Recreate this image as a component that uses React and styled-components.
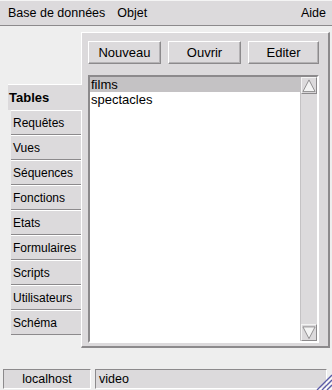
import React, { useState } from "react";
import styled, { createGlobalStyle } from "styled-components";

const GlobalStyle = createGlobalStyle`
  html, body {
    margin: 0;
    padding: 0;
    background: #eeeeee;
  }
  body {
    font-family: "Liberation Sans", Arial, sans-serif;
    font-size: 12px;
    color: #000;
  }
`;

const TABS = [
  "Tables",
  "Requêtes",
  "Vues",
  "Séquences",
  "Fonctions",
  "Etats",
  "Formulaires",
  "Scripts",
  "Utilisateurs",
  "Schéma",
];

const ITEMS = ["films", "spectacles"];

const App = () => {
  const [tab, setTab] = useState("Tables");
  const [selected, setSelected] = useState("films");

  return (
    <Window>
      <GlobalStyle />
      <MenuBar>
        <MenuItem>Base de données</MenuItem>
        <MenuItem>Objet</MenuItem>
        <MenuSpacer />
        <MenuItem>Aide</MenuItem>
      </MenuBar>

      <Body>
        <TabColumn>
          {TABS.map((t) => (
            <Tab key={t} $active={t === tab} onClick={() => setTab(t)}>
              {t}
            </Tab>
          ))}
        </TabColumn>

        <Panel>
          <ButtonRow>
            <Button>Nouveau</Button>
            <Button>Ouvrir</Button>
            <Button>Editer</Button>
          </ButtonRow>

          <ListBox>
            <ListItems>
              {ITEMS.map((it) => (
                <ListItem
                  key={it}
                  $selected={it === selected}
                  onClick={() => setSelected(it)}
                >
                  {it}
                </ListItem>
              ))}
            </ListItems>
            <ScrollBar>
              <ArrowButton>
                <svg width="15" height="15" viewBox="0 0 15 15">
                  <polygon points="7.5,1.5 1,14 14,14" fill="#f4f4f4" stroke="#8c8a8c" strokeWidth="1" />
                </svg>
              </ArrowButton>
              <Track />
              <ArrowButton>
                <svg width="15" height="15" viewBox="0 0 15 15">
                  <polygon points="1,1.5 14,1.5 7.5,14" fill="#f4f4f4" stroke="#8c8a8c" strokeWidth="1" />
                </svg>
              </ArrowButton>
            </ScrollBar>
          </ListBox>
        </Panel>
      </Body>

      <StatusBar>
        <StatusCell $width="88px" $center>localhost</StatusCell>
        <StatusCell $grow>video</StatusCell>
        <Grip>
          <svg width="16" height="16" viewBox="0 0 16 16">
            <line x1="16" y1="1" x2="1" y2="16" stroke="#5a5aa8" strokeWidth="1.3" />
            <line x1="16" y1="3.5" x2="3.5" y2="16" stroke="#ffffff" strokeWidth="1" />
            <line x1="16" y1="6" x2="6" y2="16" stroke="#5a5aa8" strokeWidth="1.3" />
            <line x1="16" y1="8.5" x2="8.5" y2="16" stroke="#ffffff" strokeWidth="1" />
            <line x1="16" y1="11" x2="11" y2="16" stroke="#5a5aa8" strokeWidth="1.3" />
            <line x1="16" y1="13.5" x2="13.5" y2="16" stroke="#ffffff" strokeWidth="1" />
          </svg>
        </Grip>
      </StatusBar>
    </Window>
  );
};

export default App;

const Window = styled.div`
  width: 332px;
  height: 390px;
  display: flex;
  flex-direction: column;
  background: #eeeeee;
  overflow: hidden;
`;

const MenuBar = styled.div`
  height: 24px;
  display: flex;
  align-items: center;
  gap: 12px;
  padding: 0 6px 0 8px;
  background: #dcdadc;
  border-top: 1px solid #f4f4f4;
  border-bottom: 1px solid #8c8a8c;
`;

const MenuItem = styled.span`
  font-size: 12.5px;
  line-height: 14px;
  cursor: default;
`;

const MenuSpacer = styled.div`
  flex: 1;
`;

const Body = styled.div`
  display: flex;
  padding: 6px 2px 0 8px;
  height: 316px;
`;

const TabColumn = styled.div`
  width: 73px;
  display: flex;
  flex-direction: column;
  align-items: flex-end;
  padding-top: 52px;
`;

const Tab = styled.div`
  box-sizing: border-box;
  width: ${({ $active }) => ($active ? "74px" : "70px")};
  margin-right: ${({ $active }) => ($active ? "-1px" : "0")};
  height: ${({ $active }) => ($active ? "26px" : "25px")};
  display: flex;
  align-items: center;
  padding-left: ${({ $active }) => ($active ? "1px" : "2px")};
  background: #dcdadc;
  border-top: 1px solid #ffffff;
  border-bottom: ${({ $active }) => ($active ? "none" : "1px solid #8c8a8c")};
  font-size: ${({ $active }) => ($active ? "13px" : "12px")};
  font-weight: ${({ $active }) => ($active ? "bold" : "normal")};
  position: relative;
  z-index: ${({ $active }) => ($active ? 1 : 0)};
  cursor: default;
`;

const Panel = styled.div`
  box-sizing: border-box;
  flex: 1;
  display: flex;
  flex-direction: column;
  background: #dcdadc;
  border-top: 1px solid #ffffff;
  border-left: 1px solid #ffffff;
  border-right: 2px solid #8c8a8c;
  border-bottom: 2px solid #8c8a8c;
  padding: 8px 9px 3px 6px;
`;

const ButtonRow = styled.div`
  display: grid;
  grid-template-columns: 73px 73px 1fr;
  gap: 7px;
`;

const Button = styled.button`
  box-sizing: border-box;
  height: 23px;
  background: #dcdadc;
  border: 1px solid #8c8a8c;
  border-top-color: #ffffff;
  border-left-color: #ffffff;
  box-shadow: inset -1px -1px 0 #b4b2b4;
  font-family: "Liberation Sans", Arial, sans-serif;
  font-size: 13px;
  color: #000;
  padding: 0;
  cursor: default;
`;

const ListBox = styled.div`
  box-sizing: border-box;
  margin-top: 11px;
  flex: 1;
  display: flex;
  background: #ffffff;
  border: 2px solid #ffffff;
  border-top-color: #8c8a8c;
  border-left-color: #8c8a8c;
  padding: 0;
`;

const ListItems = styled.div`
  flex: 1;
  display: flex;
  flex-direction: column;
`;

const ListItem = styled.div`
  height: 15px;
  line-height: 15px;
  padding-left: 1px;
  font-size: 13px;
  background: ${({ $selected }) => ($selected ? "#c4c2c4" : "transparent")};
  cursor: default;
`;

const ScrollBar = styled.div`
  width: 16px;
  display: flex;
  flex-direction: column;
  background: #dcdadc;
  border-left: 1px solid #c4c2c4;
`;

const ArrowButton = styled.div`
  box-sizing: border-box;
  height: 17px;
  display: flex;
  align-items: center;
  justify-content: center;
  background: #dcdadc;
  border: 1px solid #8c8a8c;
  border-top-color: #f4f4f4;
  border-left-color: #f4f4f4;
`;

const Track = styled.div`
  flex: 1;
  background: #dcdadc;
`;

const StatusBar = styled.div`
  margin-top: auto;
  height: 21px;
  display: flex;
  gap: 4px;
  padding: 0 0 0 3px;
  position: relative;
`;

const StatusCell = styled.div`
  box-sizing: border-box;
  width: ${({ $width }) => $width || "auto"};
  flex: ${({ $grow }) => ($grow ? 1 : "none")};
  margin-right: ${({ $grow }) => ($grow ? "5px" : "0")};
  height: 20px;
  display: flex;
  align-items: center;
  justify-content: ${({ $center }) => ($center ? "center" : "flex-start")};
  padding-left: ${({ $center }) => ($center ? "0" : "3px")};
  background: #dcdadc;
  border: 1px solid #ffffff;
  border-top-color: #8c8a8c;
  border-left-color: #8c8a8c;
  font-size: 12.5px;
`;

const Grip = styled.div`
  position: absolute;
  right: 0;
  bottom: 0;
  width: 16px;
  height: 16px;
  line-height: 0;
`;
